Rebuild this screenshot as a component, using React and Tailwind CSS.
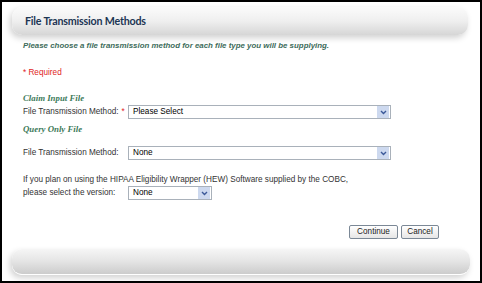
const labelFont = { fontFamily: '"Liberation Sans", Arial, sans-serif' };
const headingFont = { fontFamily: '"Liberation Serif", Georgia, serif' };

function SelectBox({ value, width }) {
  return (
    <div className={`flex h-[14px] ${width} items-center border border-[#a9b1ba] bg-white`}>
      <span className="flex-1 pl-[4px] text-[8.2px] leading-none text-black">{value}</span>
      <span className="mr-px flex h-[12px] w-[12px] items-center justify-center bg-[#cdd9ef]">
        <svg width="7" height="5" viewBox="0 0 7 5">
          <path d="M1 1 L3.5 3.5 L6 1" stroke="#3b5998" strokeWidth="1.4" fill="none" />
        </svg>
      </span>
    </div>
  );
}

function FieldRow({ label, required, value, width = "w-[263px]" }) {
  return (
    <div className="flex items-center">
      <div className="flex w-[105px] shrink-0 items-center whitespace-nowrap text-[8.2px] leading-none text-[#333]">
        {label}
        {required && <span className="ml-[3px] text-[#e02424]">*</span>}
      </div>
      <SelectBox value={value} width={width} />
    </div>
  );
}

export default function App() {
  return (
    <div className="flex h-[283px] w-[482px] flex-col border-2 border-black bg-white" style={labelFont}>
      <div className="ml-[10px] mr-[12px] mt-[5px] flex h-[28px] items-center rounded-[10px] bg-gradient-to-b from-[#fbfbfb] via-[#efefef] to-[#d6d6d6] pl-[13px] shadow-[-2px_3px_6px_rgba(0,0,0,0.18)]">
        <span className="text-[10.7px] font-bold leading-none tracking-[-0.2px] text-[#1c3553]" style={{ fontFamily: "Lato, sans-serif" }}>
          File Transmission Methods
        </span>
      </div>

      <div className="flex flex-col pl-[21px]">
        <div className="mt-[6px] h-[10px] whitespace-nowrap text-[7.9px] font-bold italic leading-[10px] text-[#3d6b5a]">
          Please choose a file transmission method for each file type you will be supplying.
        </div>

        <div className="mt-[17px] h-[10px] text-[8.2px] leading-[10px] text-[#e02424]">* Required</div>

        <div className="mt-[15px] h-[11px] text-[8.8px] font-bold italic leading-[11px] text-[#3d7a5a]" style={headingFont}>
          Claim Input File
        </div>
        <div className="mt-px">
          <FieldRow label="File Transmission Method:" required value="Please Select" />
        </div>

        <div className="mt-[5px] h-[11px] text-[8.8px] font-bold italic leading-[11px] text-[#3d7a5a]" style={headingFont}>
          Query Only File
        </div>
        <div className="mt-[11px]">
          <FieldRow label="File Transmission Method:" value="None" />
        </div>

        <div className="mt-[15px] h-[10px] whitespace-nowrap text-[8.2px] leading-[10px] text-[#333]">
          If you plan on using the HIPAA Eligibility Wrapper (HEW) Software supplied by the COBC,
        </div>
        <div className="mt-px">
          <FieldRow label="please select the version:" value="None" width="w-[84px]" />
        </div>

        <div className="mt-[25px] flex justify-end gap-[3px] pr-[41px]">
          <button className="h-[14px] w-[49px] rounded-[2px] border border-[#7b8896] bg-gradient-to-b from-white to-[#e6e6e6] text-[8.2px] leading-none text-[#222]">
            Continue
          </button>
          <button className="h-[14px] w-[38px] rounded-[2px] border border-[#7b8896] bg-gradient-to-b from-white to-[#e6e6e6] text-[8.2px] leading-none text-[#222]">
            Cancel
          </button>
        </div>
      </div>

      <div className="ml-[10px] mr-[10px] mt-[10px] h-[26px] rounded-[10px] border-b border-white bg-gradient-to-b from-[#f6f6f6] via-[#e4e4e4] to-[#cccccc] shadow-[-2px_3px_6px_rgba(0,0,0,0.18)]" />
    </div>
  );
}
